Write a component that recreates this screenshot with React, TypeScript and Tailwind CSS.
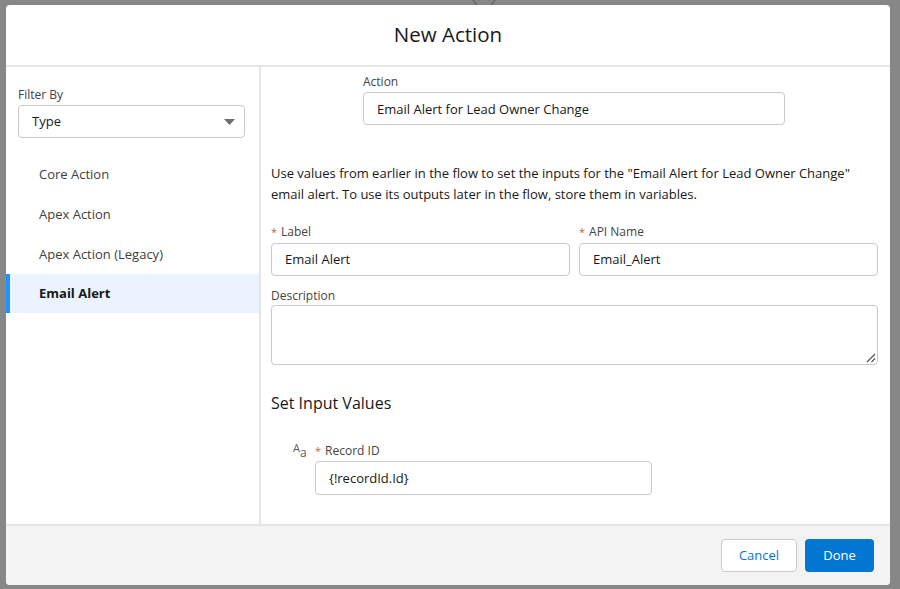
const font = { fontFamily: '"Open Sans", sans-serif' };

const Asterisk = () => <span className="mr-[4px] text-[11px] text-[#c9653f]">*</span>;

const Field = ({ label, value, required }: { label: string; value: string; required?: boolean }) => (
  <div className="flex-1">
    <div className="h-[18px] text-[12px] leading-[18px] text-[#444]">
      {required && <Asterisk />}
      {label}
    </div>
    <div className="mt-[2px] h-[33px] rounded-[4px] border border-[#c9c9c9] bg-white pl-[13px] text-[13px] leading-[31px] text-[#181818]">
      {value}
    </div>
  </div>
);

const filters = ["Core Action", "Apex Action", "Apex Action (Legacy)"];

export default function App() {
  return (
    <div className="relative h-[589px] w-[900px] overflow-hidden bg-[#878787] pt-[5px] pl-[6px]" style={font}>
      {/* bit of the flow canvas showing behind the modal */}
      <svg className="absolute left-[470px] top-0" width="28" height="5" viewBox="0 0 28 5">
        <path d="M3 0c1 2 2 3 4 5M25 0c-1 2-2 3-4 5" stroke="#5f5f5f" strokeWidth="1.2" fill="none" />
      </svg>
      <div className="relative flex h-[580px] w-[884px] flex-col overflow-hidden rounded-[4px] bg-white">
        {/* Header */}
        <div className="flex h-[62px] items-center justify-center border-b-2 border-[#e5e5e5] pb-[2px] text-[20.5px] text-[#181818]">
          New Action
        </div>

        <div className="flex flex-1">
          {/* Filter sidebar */}
          <div className="w-[255px] border-r-2 border-[#e5e5e5]">
            <div className="pl-[12px] pr-[14px] pt-[19px]">
              <div className="text-[12px] leading-[18px] text-[#444]">Filter By</div>
              <div className="mt-[1px] flex h-[33px] items-center justify-between rounded-[4px] border border-[#c9c9c9] pl-[13px] pr-[9px] text-[13px] text-[#181818]">
                Type
                <svg width="11" height="6" viewBox="0 0 11 6">
                  <path d="M0 0h11L5.5 6z" fill="#706e6b" />
                </svg>
              </div>
            </div>
            <div className="mt-[17px]">
              {filters.map((f, i) => (
                <div
                  key={f}
                  className={
                    i === 2
                      ? "flex h-[39px] items-center pl-[33px] text-[13px] text-[#3e3e3c]"
                      : "flex h-[40px] items-center pl-[33px] text-[13px] text-[#3e3e3c]"
                  }
                >
                  {f}
                </div>
              ))}
              <div className="flex h-[39px] items-center border-l-[4px] border-[#1b96ff] bg-[#ebf4fe] pl-[29px] text-[13px] font-bold text-[#181818]">
                Email Alert
              </div>
            </div>
          </div>

          {/* Action config */}
          <div className="flex-1 pl-[10px] pr-[12px]">
            <div className="ml-[92px] mt-[6px] w-[422px]">
              <div className="h-[18px] text-[12px] leading-[18px] text-[#444]">Action</div>
              <div className="mt-[1px] h-[33px] rounded-[4px] border border-[#c9c9c9] pl-[13px] text-[13px] leading-[32px] text-[#181818]">
                Email Alert for Lead Owner Change
              </div>
            </div>

            <p className="mt-[38px] w-[600px] text-[13px] leading-[21px] text-[#181818]">
              Use values from earlier in the flow to set the inputs for the "Email Alert for Lead Owner Change" email
              alert. To use its outputs later in the flow, store them in variables.
            </p>

            <div className="mt-[18px] flex gap-[9px]">
              <Field required label="Label" value="Email Alert" />
              <Field required label="API Name" value="Email_Alert" />
            </div>

            <div className="mt-[11px] h-[18px] text-[12px] leading-[18px] text-[#444]">Description</div>
            <div className="relative h-[60px] rounded-[4px] border border-[#c9c9c9]">
              <svg className="absolute right-[1px] bottom-[1px]" width="10" height="10" viewBox="0 0 10 10">
                <path d="M1 9l8-8M5.5 9L9 5.5" stroke="#555" strokeWidth="1.2" />
              </svg>
            </div>

            <div className="mt-[26px] text-[16px] leading-[24px] text-[#181818]">Set Input Values</div>

            <div className="mt-[27px] flex pl-[22px]">
              <div className="flex w-[22px] items-start font-medium text-[#5c5c5c]">
                <span className="text-[11px] leading-[12px]">A</span>
                <span className="mt-[5px] text-[12px] leading-[12px]">a</span>
              </div>
              <div className="w-[337px]">
                <div className="h-[18px] text-[12px] leading-[18px] text-[#444]">
                  <Asterisk />Record ID
                </div>
                <div className="mt-[1px] h-[34px] rounded-[4px] border border-[#c9c9c9] pl-[13px] text-[13px] leading-[32px] text-[#181818]">
                  {"{!recordId.Id}"}
                </div>
              </div>
            </div>
          </div>
        </div>

        {/* Footer */}
        <div className="flex h-[61px] items-center justify-end gap-[8px] border-t-2 border-[#e5e5e5] bg-[#f3f3f3] pr-[16px]">
          <button className="h-[33px] w-[76px] rounded-[4px] border border-[#c9c9c9] bg-white text-[13px] text-[#0176d3]">
            Cancel
          </button>
          <button className="h-[33px] w-[69px] rounded-[4px] bg-[#0176d3] text-[13px] text-white">Done</button>
        </div>
      </div>
    </div>
  );
}
